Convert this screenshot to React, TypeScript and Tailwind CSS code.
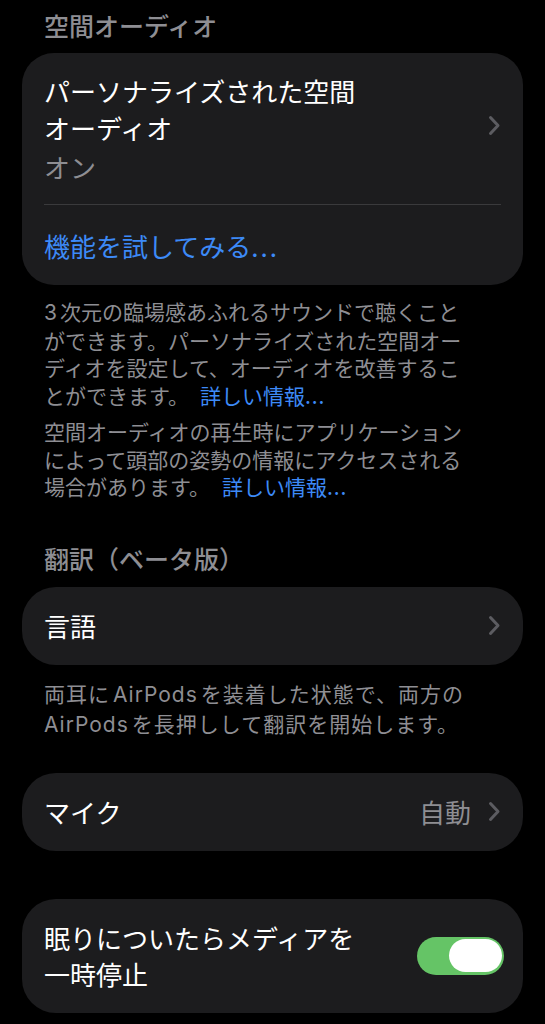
const font = {
  fontFamily: '"Noto Sans CJK JP", "Noto Sans", sans-serif',
};

const latin = "font-['Inter','Noto_Sans_CJK_JP',sans-serif]";

function Chevron() {
  return (
    <svg width="13" height="21" viewBox="0 0 13 21" fill="none" className="shrink-0">
      <path
        d="M2.5 2.5L10 10.5L2.5 18.5"
        stroke="#5c5c61"
        strokeWidth="3"
        strokeLinecap="round"
        strokeLinejoin="round"
      />
    </svg>
  );
}

function Toggle() {
  return (
    <div className="w-[87px] h-[38px] rounded-full bg-[#65c466] flex items-center justify-end px-[2px] shrink-0">
      <div className="w-[53px] h-[33px] rounded-full bg-white" />
    </div>
  );
}

function More() {
  return (
    <span className="text-[#3d8af7]">
      詳しい情報<span className="tracking-[1px]">...</span>
    </span>
  );
}

export default function App() {
  return (
    <div className="min-h-screen w-full bg-black text-white pb-[12px]" style={font}>
      {/* 空間オーディオ */}
      <div className="px-[44px] pt-[10px] text-[25px] leading-[30px] font-medium text-[#8e8e93]">
        空間オーディオ
      </div>

      <div className="mx-[22px] mt-[13px] rounded-[32px] bg-[#1c1c1e] px-[22px] pt-[19px] pb-[21px]">
        <div className="flex items-center justify-between">
          <div>
            <div className="text-[26px] leading-[37px] text-white">
              パーソナライズされた空間
              <br />
              オーディオ
            </div>
            <div className="mt-[2px] text-[26px] leading-[37px] text-[#8e8e93]">オン</div>
          </div>
          <div className="mb-[6px]">
            <Chevron />
          </div>
        </div>
        <div className="mt-[19px] h-px bg-[#3a3a3c]" />
        <div className="mt-[22px] text-[26px] leading-[37px] text-[#3d8af7]">
          機能を試してみる<span className="tracking-[2px]">...</span>
        </div>
      </div>

      <div className="px-[44px] mt-[13px] text-[21px] leading-[27.5px] text-[#8e8e93]">
        <p>
          <span className={`${latin} mr-[3px]`}>3</span>次元の臨場感あふれるサウンドで聴くこと
          <br />
          ができます。パーソナライズされた空間オー
          <br />
          ディオを設定して、オーディオを改善するこ
          <br />
          とができます。
          <span className="ml-[11px]">
            <More />
          </span>
        </p>
        <p className="mt-[9px]">
          空間オーディオの再生時にアプリケーション
          <br />
          によって頭部の姿勢の情報にアクセスされる
          <br />
          場合があります。
          <span className="ml-[12px]">
            <More />
          </span>
        </p>
      </div>

      {/* 翻訳 */}
      <div className="px-[44px] mt-[42px] text-[25px] leading-[30px] font-medium text-[#8e8e93]">
        翻訳（ベータ版）
      </div>

      <div className="mx-[22px] mt-[14px] h-[78px] rounded-[34px] bg-[#1c1c1e] px-[22px] flex items-center justify-between">
        <span className="text-[26px] leading-[37px]">言語</span>
        <Chevron />
      </div>

      <div className="px-[44px] mt-[14px] text-[21px] leading-[28px] tracking-[1px] text-[#8e8e93]">
        両耳に<span className={`${latin} mx-[3px]`}>AirPods</span>を装着した状態で、両方の
        <br />
        <span className={`${latin} mr-[3px]`}>AirPods</span>を長押しして翻訳を開始します。
      </div>

      <div className="mx-[22px] mt-[34px] h-[78px] rounded-[34px] bg-[#1c1c1e] px-[22px] flex items-center justify-between">
        <span className="text-[26px] leading-[37px]">マイク</span>
        <div className="flex items-center gap-[17px]">
          <span className="text-[26px] leading-[37px] text-[#8e8e93]">自動</span>
          <Chevron />
        </div>
      </div>

      <div className="mx-[22px] mt-[48px] rounded-[34px] bg-[#1c1c1e] pl-[22px] pr-[19px] pt-[21px] pb-[21px] flex items-center justify-between">
        <div className="text-[26px] leading-[36px]">
          眠りについたらメディアを
          <br />
          一時停止
        </div>
        <Toggle />
      </div>
    </div>
  );
}
